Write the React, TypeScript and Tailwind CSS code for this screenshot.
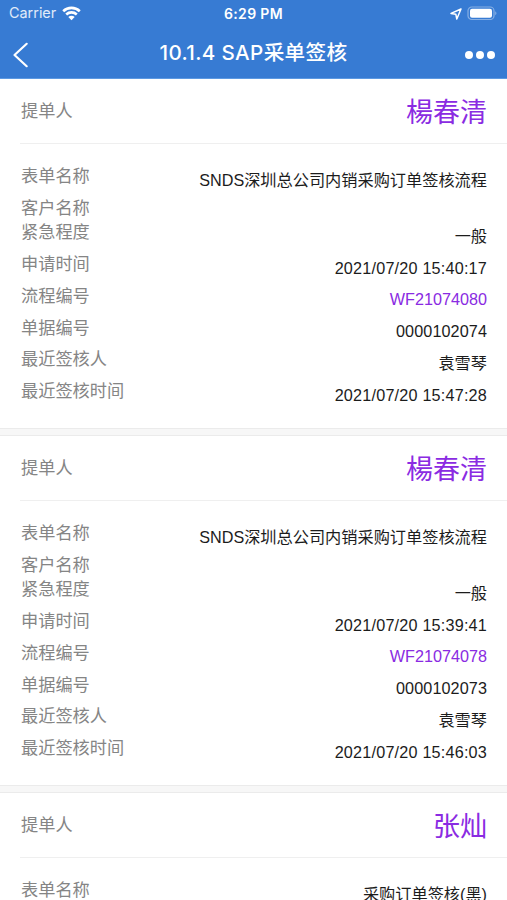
import React from "react";

const orders = [
  {
    submitter: "楊春清",
    rows: [
      { label: "表单名称", value: "SNDS深圳总公司内销采购订单签核流程" },
      { label: "客户名称", value: "" },
      { label: "紧急程度", value: "一般" },
      { label: "申请时间", value: "2021/07/20 15:40:17", type: "time" },
      { label: "流程编号", value: "WF21074080", type: "link" },
      { label: "单据编号", value: "0000102074", type: "number" },
      { label: "最近签核人", value: "袁雪琴" },
      { label: "最近签核时间", value: "2021/07/20 15:47:28", type: "time" },
    ],
  },
  {
    submitter: "楊春清",
    rows: [
      { label: "表单名称", value: "SNDS深圳总公司内销采购订单签核流程" },
      { label: "客户名称", value: "" },
      { label: "紧急程度", value: "一般" },
      { label: "申请时间", value: "2021/07/20 15:39:41", type: "time" },
      { label: "流程编号", value: "WF21074078", type: "link" },
      { label: "单据编号", value: "0000102073", type: "number" },
      { label: "最近签核人", value: "袁雪琴" },
      { label: "最近签核时间", value: "2021/07/20 15:46:03", type: "time" },
    ],
  },
  {
    submitter: "张灿",
    rows: [{ label: "表单名称", value: "采购订单签核(黑)" }],
  },
];

const valueStyles: Record<string, string> = {
  text: "text-[#1c1c1c]",
  time: "text-[#1c1c1c] tracking-[0.2px]",
  number: "text-[#1c1c1c] tracking-[0.1px]",
  link: "text-[#8a2be2]",
};

const StatusBar = () => (
  <div className="flex h-[27px] items-center px-[9px] text-white">
    <div className="flex flex-1 items-center gap-[6px]">
      <span className="text-[14.4px] leading-none text-white/85">
        Carrier
      </span>
      <svg width="19" height="15" viewBox="0 0 19 15" fill="none">
        <path
          d="M1.2 5.2C5.8 .8 13.2 .8 17.8 5.2M4.2 8.5C7.2 5.7 11.8 5.7 14.8 8.5"
          stroke="white"
          strokeWidth="2.6"
        />
        <path d="M9.5 14.2L6.3 11C8.1 9.3 10.9 9.3 12.7 11Z" fill="white" />
      </svg>
    </div>
    <span className="text-[14px] leading-none font-semibold tracking-[0.35px]">
      6:29 PM
    </span>
    <div className="flex flex-1 items-center justify-end gap-[5px]">
      <svg width="12" height="12" viewBox="0 0 12 12" fill="none">
        <path
          d="M11 1L1 5.4L5.8 6.2L6.8 11Z"
          stroke="white"
          strokeWidth="1.5"
          strokeLinejoin="round"
        />
      </svg>
      <svg width="31" height="15" viewBox="0 0 31 15" fill="none">
        <rect
          x="1"
          y="1"
          width="26"
          height="12.5"
          rx="3.8"
          stroke="white"
          strokeOpacity="0.4"
          strokeWidth="1.2"
        />
        <rect x="3" y="2.8" width="22" height="9" rx="2" fill="white" />
        <path d="M28.4 5.2Q30.4 7.2 28.4 9.2Z" fill="white" fillOpacity="0.5" />
      </svg>
    </div>
  </div>
);

const NavBar = () => (
  <div className="flex h-[51px] items-center">
    <div className="flex flex-1 pt-[4px] pl-[12px]">
      <svg width="18" height="26" viewBox="0 0 18 26" fill="none">
        <path
          d="M14.7 1.8L2.5 13L14.7 24.2"
          stroke="white"
          strokeWidth="2.2"
          strokeLinecap="round"
          strokeLinejoin="round"
        />
      </svg>
    </div>
    <h1 className="text-[20.6px] leading-[51px] font-medium tracking-[0.35px] text-white">
      10.1.4 SAP采单签核
    </h1>
    <div className="flex flex-1 justify-end gap-[3px] pt-[4px] pr-[12px]">
      <span className="h-[8px] w-[8px] rounded-full bg-white" />
      <span className="h-[8px] w-[8px] rounded-full bg-white" />
      <span className="h-[8px] w-[8px] rounded-full bg-white" />
    </div>
  </div>
);

const OrderCard = ({ order }: { order: (typeof orders)[number] }) => (
  <section className="flex h-[357px] flex-col">
    <div className="ml-5 flex h-[65px] shrink-0 items-center justify-between border-b border-[#efefef] pr-5 pl-px">
      <span className="pt-[2px] text-[17.2px] text-[#858585]">提单人</span>
      <span className="pt-[3px] text-[27px] leading-[60px] text-[#8a2be2]">
        {order.submitter}
      </span>
    </div>
    <div className="flex-1 pt-5 pr-5 pl-[21px]">
      {order.rows.map((row) => (
        <div
          key={row.label}
          className={`flex items-start justify-between ${
            row.value ? "h-[31.8px]" : "h-[24.5px]"
          }`}
        >
          <span className="h-6 text-[17.2px] leading-6 text-[#858585]">
            {row.label}
          </span>
          <span
            className={`mt-[3.5px] h-6 text-[16.2px] leading-6 ${
              valueStyles[row.type ?? "text"]
            }`}
          >
            {row.value}
          </span>
        </div>
      ))}
    </div>
    <div className="h-[8px] shrink-0 border-y border-[#ebebeb] bg-[#f7f7f7]" />
  </section>
);

export default function App() {
  return (
    <div className="h-[900px] w-full overflow-hidden bg-white font-['Liberation_Sans','Noto_Sans_CJK_SC',sans-serif]">
      <header className="h-[79px] border-b border-[#5c99e2] bg-[#377bd3] font-['Inter','Noto_Sans_CJK_SC',sans-serif]">
        <StatusBar />
        <NavBar />
      </header>
      <main>
        {orders.map((order, index) => (
          <OrderCard key={index} order={order} />
        ))}
      </main>
    </div>
  );
}
